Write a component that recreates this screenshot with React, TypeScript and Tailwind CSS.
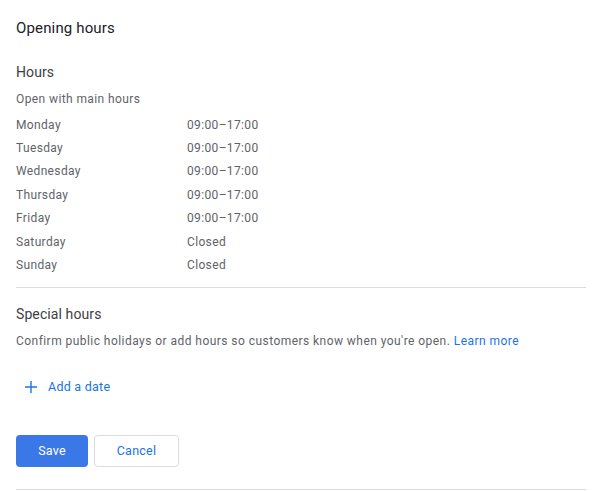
import React from "react";

const days: [string, string][] = [
  ["Monday", "09:00–17:00"],
  ["Tuesday", "09:00–17:00"],
  ["Wednesday", "09:00–17:00"],
  ["Thursday", "09:00–17:00"],
  ["Friday", "09:00–17:00"],
  ["Saturday", "Closed"],
  ["Sunday", "Closed"],
];

export default function App() {
  return (
    <div className="w-[609px] h-[491px] bg-white font-['Roboto',sans-serif] pl-4 pr-[23px] overflow-hidden">
      <h1 className="pt-[18px] text-[15px] leading-5 text-[#202124] tracking-[0.15px]">Opening hours</h1>
      <h2 className="mt-[24px] text-[14px] leading-5 text-[#3c4043] tracking-[0.1px]">Hours</h2>
      <p className="mt-[9px] text-[12px] leading-4 text-[#5f6368] tracking-[0.4px]">Open with main hours</p>
      <div className="mt-[6px] flex flex-col">
        {days.map(([d, h]) => (
          <div key={d} className="flex h-[23.4px] items-center text-[12px] text-[#5f6368] tracking-[0.35px]">
            <span className="w-[171px]">{d}</span>
            <span>{h}</span>
          </div>
        ))}
      </div>
      <div className="mt-[10px] border-t border-[#dadce0]" />
      <h2 className="mt-[16px] text-[14px] leading-5 text-[#3c4043] tracking-[0.1px]">Special hours</h2>
      <p className="mt-[9px] text-[12px] leading-4 text-[#5f6368] tracking-[0.45px]">
        Confirm public holidays or add hours so customers know when you're open.{" "}
        <a className="text-[#1a73e8]">Learn more</a>
      </p>
      <button className="mt-[29px] flex items-center gap-[10px] pl-[8px] text-[12.5px] text-[#1a73e8] tracking-[0.25px]">
        <svg width="14" height="14" viewBox="0 0 14 14" fill="none" stroke="#1a73e8" strokeWidth="1.4">
          <path d="M7 1v12M1 7h12" />
        </svg>
        Add a date
      </button>
      <div className="mt-[39px] flex gap-[6px]">
        <button className="w-[72px] h-[32px] rounded-[4px] bg-[#3b78e7] text-white text-[12.5px] tracking-[0.25px]">Save</button>
        <button className="w-[85px] h-[32px] rounded-[4px] border border-[#dadce0] bg-white text-[#1a73e8] text-[12.5px] tracking-[0.25px]">Cancel</button>
      </div>
      <div className="mt-[22px] border-t border-[#dadce0]" />
    </div>
  );
}
